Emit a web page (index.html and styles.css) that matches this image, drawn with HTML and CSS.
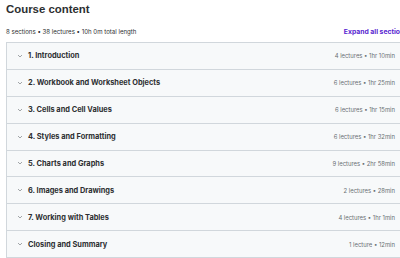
FILE: index.html
```html
<!DOCTYPE html>
<html>
<head>
  <meta name="viewport" content="width=device-width, initial-scale=1.0">
  <title>Course content</title>
  <link rel="stylesheet" href="styles.css">
</head>
<body>
  <div class="curriculum">
    <h2 class="title">Course content</h2>
    <div class="summary">
      <span>8 sections • 38 lectures • 10h 0m total length</span>
      <button class="expand">Expand all sections</button>
    </div>

    <div class="sections">
      <div class="section">
        <span class="chev"><svg viewBox="0 0 10 10"><path d="M3 4 5 6 7 4"/></svg></span>
        <span class="name">1. Introduction</span>
        <span class="meta">4 lectures • 1hr 10min</span>
      </div>
      <div class="section">
        <span class="chev"><svg viewBox="0 0 10 10"><path d="M3 4 5 6 7 4"/></svg></span>
        <span class="name">2. Workbook and Worksheet Objects</span>
        <span class="meta">6 lectures • 1hr 25min</span>
      </div>
      <div class="section">
        <span class="chev"><svg viewBox="0 0 10 10"><path d="M3 4 5 6 7 4"/></svg></span>
        <span class="name">3. Cells and Cell Values</span>
        <span class="meta">6 lectures • 1hr 15min</span>
      </div>
      <div class="section">
        <span class="chev"><svg viewBox="0 0 10 10"><path d="M3 4 5 6 7 4"/></svg></span>
        <span class="name">4. Styles and Formatting</span>
        <span class="meta">6 lectures • 1hr 32min</span>
      </div>
      <div class="section">
        <span class="chev"><svg viewBox="0 0 10 10"><path d="M3 4 5 6 7 4"/></svg></span>
        <span class="name">5. Charts and Graphs</span>
        <span class="meta">9 lectures • 2hr 58min</span>
      </div>
      <div class="section">
        <span class="chev"><svg viewBox="0 0 10 10"><path d="M3 4 5 6 7 4"/></svg></span>
        <span class="name">6. Images and Drawings</span>
        <span class="meta">2 lectures • 28min</span>
      </div>
      <div class="section">
        <span class="chev"><svg viewBox="0 0 10 10"><path d="M3 4 5 6 7 4"/></svg></span>
        <span class="name">7. Working with Tables</span>
        <span class="meta">4 lectures • 1hr 1min</span>
      </div>
      <div class="section">
        <span class="chev"><svg viewBox="0 0 10 10"><path d="M3 4 5 6 7 4"/></svg></span>
        <span class="name">Closing and Summary</span>
        <span class="meta">1 lecture • 12min</span>
      </div>
    </div>
  </div>
</body>
</html>
```

FILE: styles.css
```css
body {
  margin: 0;
  padding: 0;
  background: #fff;
  overflow: hidden;
  font-family: Inter, 'Noto Sans', sans-serif;
  color: #2d2f31;
}

.curriculum {
  width: 398px;
  padding: 0 0 0 6px;
}

.title {
  margin: 0;
  padding-top: 2.4px;
  font-family: 'Liberation Sans', Arial, sans-serif;
  font-size: 11.4px;
  font-weight: 700;
  line-height: 14px;
}

.summary {
  display: flex;
  justify-content: space-between;
  align-items: center;
  margin-top: 9.6px;
  height: 12px;
  font-size: 6.1px;
  color: #2d2f31;
}

.expand {
  border: none;
  background: none;
  padding: 0;
  font-family: inherit;
  font-size: 6.8px;
  font-weight: 700;
  color: #5624d0;
  white-space: nowrap;
  margin-right: -4px;
}

.sections {
  margin-top: 4px;
  border: 1px solid #d1d7dc;
  border-bottom: none;
}

.section {
  display: flex;
  align-items: center;
  height: 25.9px;
  padding: 0 8px 0 8px;
  background: #f7f9fa;
  border-bottom: 1px solid #d1d7dc;
}

.chev {
  display: flex;
  width: 10px;
  height: 10px;
  margin-right: 3px;
}

.chev svg {
  width: 10px;
  height: 10px;
  fill: none;
  stroke: #8a8f93;
  stroke-width: 0.8;
}

.name {
  flex: 1;
  font-size: 7.4px;
  font-weight: 700;
}

.meta {
  font-size: 5.9px;
  color: #6a6f73;
}
```
